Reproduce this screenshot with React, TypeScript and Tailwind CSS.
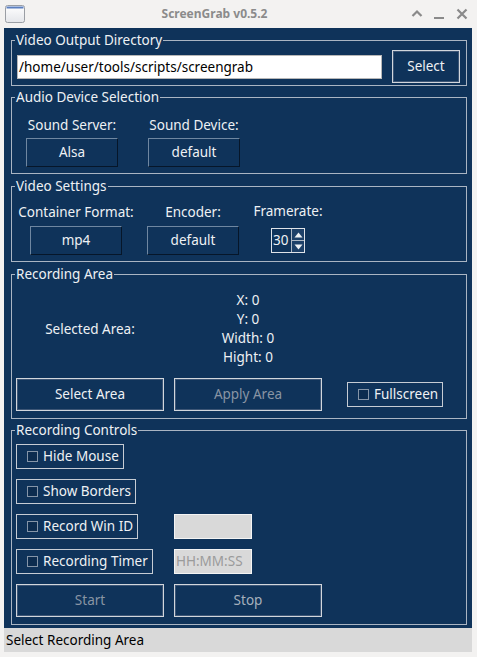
import React from "react";

function Group({
  title,
  className,
  children,
}: {
  title: string;
  className: string;
  children: React.ReactNode;
}) {
  return (
    <fieldset className={`border border-[#aab5c3] min-w-0 ${className}`}>
      <legend className="ml-[3px] px-[1px] text-[13.5px] leading-[14px] text-[#eef1f4]">
        {title}
      </legend>
      {children}
    </fieldset>
  );
}

function Btn({
  label,
  className,
  dim,
}: {
  label: string;
  className: string;
  dim?: string;
}) {
  return (
    <div
      className={`flex items-center justify-center border border-[#d2d6dc] shadow-[inset_0_0_0_1px_#3d5676] text-[13.5px] ${
        dim ? dim : "text-[#eef1f4]"
      } ${className}`}
    >
      {label}
    </div>
  );
}

function Combo({ label }: { label: string }) {
  return (
    <div className="w-[92px] h-[29px] flex items-center justify-center border border-t-[#6f87a1] border-l-[#6f87a1] border-r-[#061629] border-b-[#061629] text-[13.5px] text-[#eef1f4]">
      {label}
    </div>
  );
}

function Check({ label, className }: { label: string; className?: string }) {
  return (
    <div
      className={`inline-flex items-center h-[25px] border border-[#c6ccd4] pl-[10px] pr-[4px] text-[13.5px] text-[#eef1f4] ${
        className ?? ""
      }`}
    >
      <span className="w-[11px] h-[11px] border border-[#8595a8] bg-[#0c2c4f] mr-[5px]" />
      {label}
    </div>
  );
}

export default function App() {
  return (
    <div className="w-[477px] h-[657px] bg-[#f3f2f1] flex flex-col font-['Noto_Sans',sans-serif] overflow-hidden">
      {/* Title bar */}
      <div className="h-[28px] flex items-center shrink-0">
        <div className="w-[25px] h-[28px] flex items-center pl-[5px]">
          <svg width="20" height="18" viewBox="0 0 20 18">
            <defs>
              <linearGradient id="g" x1="0" y1="0" x2="0" y2="1">
                <stop offset="0" stopColor="#ffffff" />
                <stop offset="1" stopColor="#e4e6ea" />
              </linearGradient>
            </defs>
            <rect x="0.5" y="0.5" width="19" height="17" rx="2" fill="url(#g)" stroke="#9a9ea4" />
            <rect x="1.5" y="1.5" width="17" height="2" fill="#5b7fc0" />
          </svg>
        </div>
        <div className="flex-1 text-center font-bold text-[12px] text-[#8b8b8b]">
          ScreenGrab v0.5.2
        </div>
        <div className="w-[73px] pr-[4px] flex items-center">
          <div className="w-[23px] flex justify-center pl-[2px]">
            <svg width="12" height="12" viewBox="0 0 12 12">
              <path d="M1.5 8 L6 3.5 L10.5 8" fill="none" stroke="#8a8a8a" strokeWidth="2.2" />
            </svg>
          </div>
          <div className="w-[23px] flex justify-center">
            <svg width="12" height="12" viewBox="0 0 12 12">
              <path d="M1 10 H11" fill="none" stroke="#8a8a8a" strokeWidth="2" />
            </svg>
          </div>
          <div className="w-[23px] flex justify-center">
            <svg width="12" height="12" viewBox="0 0 12 12">
              <path d="M1.5 1.5 L10.5 10.5 M10.5 1.5 L1.5 10.5" fill="none" stroke="#8a8a8a" strokeWidth="2.2" />
            </svg>
          </div>
        </div>
      </div>

      {/* Body */}
      <div className="flex pl-[4px] pr-[5px] shrink-0">
        <div className="w-[468px] h-[600px] bg-[#0f335a] pl-[7px] pr-[5px] pt-[5px] flex flex-col">
          <Group title="Video Output Directory" className="h-[53px]">
            <div className="flex items-center pl-[5px] pt-[3px]">
              <div className="w-[365px] h-[24px] bg-white border border-[#b7b7b7] text-black text-[13.5px] leading-[22px] pl-[1px]">
                /home/user/tools/scripts/screengrab
              </div>
              <Btn label="Select" className="ml-[10px] w-[68px] h-[33px]" />
            </div>
          </Group>

          <Group title="Audio Device Selection" className="h-[84px] mt-[4px]">
            <div className="flex pl-[14px] pt-[13px] gap-[30px]">
              <div className="flex flex-col items-center w-[92px]">
                <div className="text-[13.5px] leading-[16px] text-[#eef1f4] whitespace-nowrap">Sound Server:</div>
                <div className="mt-[5px]">
                  <Combo label="Alsa" />
                </div>
              </div>
              <div className="flex flex-col items-center w-[92px]">
                <div className="text-[13.5px] leading-[16px] text-[#eef1f4] whitespace-nowrap">Sound Device:</div>
                <div className="mt-[5px]">
                  <Combo label="default" />
                </div>
              </div>
            </div>
          </Group>

          <Group title="Video Settings" className="h-[83px] mt-[5px]">
            <div className="flex pl-[5px] pt-[11px]">
              <div className="flex flex-col items-center w-[118px]">
                <div className="text-[13.5px] leading-[16px] text-[#eef1f4] whitespace-nowrap">Container Format:</div>
                <div className="mt-[6px]">
                  <Combo label="mp4" />
                </div>
              </div>
              <div className="flex flex-col items-center w-[92px] ml-[12px]">
                <div className="text-[13.5px] leading-[16px] text-[#eef1f4] whitespace-nowrap">Encoder:</div>
                <div className="mt-[6px]">
                  <Combo label="default" />
                </div>
              </div>
              <div className="flex flex-col items-center w-[74px] ml-[12px]">
                <div className="text-[13.5px] leading-[16px] text-[#eef1f4] whitespace-nowrap -mt-[1px]">Framerate:</div>
                <div className="mt-[9px] w-[34px] h-[25px] border border-[#dfe3e8] flex">
                  <div className="flex-1 text-[13.5px] leading-[23px] text-[#eef1f4] pl-[1px]">30</div>
                  <div className="w-[13px] flex flex-col border-l border-[#aeb8c4]">
                    <div className="flex-1 flex items-center justify-center border-b border-[#aeb8c4] bg-[#1d4068]">
                      <svg width="9" height="6" viewBox="0 0 9 6">
                        <path d="M0.5 5.5 L4.5 0.5 L8.5 5.5 Z" fill="#eef1f4" />
                      </svg>
                    </div>
                    <div className="flex-1 flex items-center justify-center bg-[#1d4068]">
                      <svg width="9" height="6" viewBox="0 0 9 6">
                        <path d="M0.5 0.5 L4.5 5.5 L8.5 0.5 Z" fill="#eef1f4" />
                      </svg>
                    </div>
                  </div>
                </div>
              </div>
            </div>
          </Group>

          <Group title="Recording Area" className="h-[152px] mt-[5px]">
            <div className="flex flex-col pl-[4px] pt-[10px]">
              <div className="flex gap-[10px]">
                <div className="w-[148px] flex items-center justify-center text-[13.5px] text-[#eef1f4]">
                  Selected Area:
                </div>
                <div className="w-[148px] flex flex-col items-center text-[13.5px] leading-[19px] text-[#eef1f4]">
                  <div>X: 0</div>
                  <div>Y: 0</div>
                  <div>Width: 0</div>
                  <div>Hight: 0</div>
                </div>
              </div>
              <div className="flex items-center mt-[11px]">
                <Btn label="Select Area" className="w-[148px] h-[33px]" />
                <Btn label="Apply Area" className="w-[148px] h-[33px] ml-[10px]" dim="text-[#8995a4]" />
                <div className="ml-[25px]">
                  <Check label="Fullscreen" className="pr-[3px]" />
                </div>
              </div>
            </div>
          </Group>

          <Group title="Recording Controls" className="h-[202px] mt-[4px]">
            <div className="flex flex-col pl-[4px] pt-[7px] gap-[10px]">
              <div className="flex">
                <Check label="Hide Mouse" />
              </div>
              <div className="flex">
                <Check label="Show Borders" />
              </div>
              <div className="flex items-center">
                <div className="w-[158px]">
                  <Check label="Record Win ID" />
                </div>
                <div className="w-[78px] h-[25px] bg-[#d9d9d9] border border-[#f4f4f4]" />
              </div>
              <div className="flex items-center">
                <div className="w-[158px]">
                  <Check label="Recording Timer" />
                </div>
                <div className="w-[78px] h-[25px] bg-[#d9d9d9] border border-[#f4f4f4] text-[13.5px] leading-[23px] text-[#9b9b9b] pl-[1px]">
                  HH:MM:SS
                </div>
              </div>
              <div className="flex items-center">
                <Btn label="Start" className="w-[148px] h-[33px]" dim="text-[#8995a4]" />
                <Btn label="Stop" className="w-[148px] h-[33px] ml-[10px]" dim="text-[#a6b0bc]" />
              </div>
            </div>
          </Group>
        </div>
      </div>

      {/* Status bar */}
      <div className="flex pl-[4px] pr-[5px] shrink-0">
        <div className="w-[468px] h-[24px] bg-[#d9d9d9] pl-[2px] text-[13.5px] leading-[24px] text-black">
          Select Recording Area
        </div>
      </div>
    </div>
  );
}
